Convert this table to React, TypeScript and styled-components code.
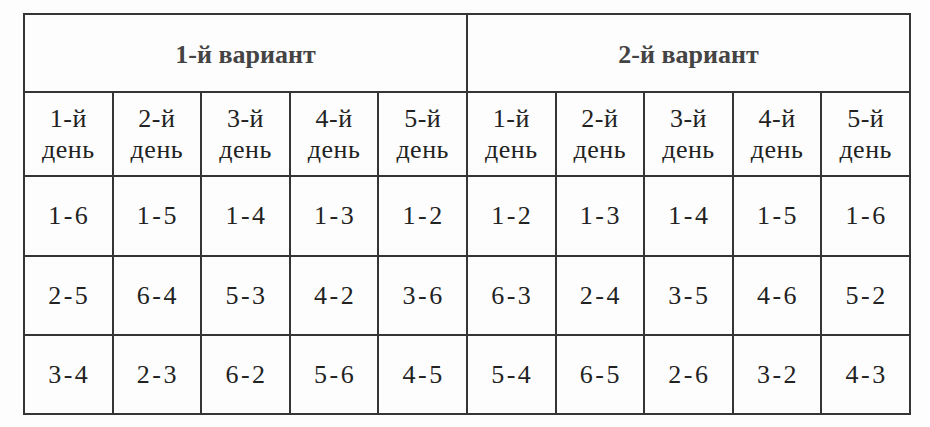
import React from "react";
import styled, { createGlobalStyle } from "styled-components";

const serif = `"Liberation Serif", "DejaVu Serif", "Times New Roman", serif`;

const GlobalStyle = createGlobalStyle`
  body {
    margin: 0;
    background: #ffffff;
    font-family: ${serif};
  }
`;

const Page = styled.div`
  width: 930px;
  height: 427px;
  padding: 13px 0 0 23px;
  box-sizing: border-box;
  background: #fdfdfd;
`;

const Table = styled.table`
  border-collapse: collapse;
  table-layout: fixed;
  width: 888px;
  color: #222222;
  font-family: ${serif};
`;

const Cell = styled.td<{ $h: number }>`
  border: 2px solid #353535;
  height: ${(p) => p.$h}px;
  padding: 0;
  text-align: center;
  vertical-align: middle;
  box-sizing: border-box;
  font-family: ${serif};
`;

const VariantCell = styled(Cell)`
  font-size: 26px;
  font-weight: bold;
  color: #444444;
  padding-top: 4px;
`;

const DayCell = styled(Cell)`
  font-size: 26px;
  line-height: 31px;
  letter-spacing: 0.5px;
`;

const PairCell = styled(Cell)`
  font-size: 26px;
  letter-spacing: 2.5px;
  padding-left: 2px;
`;

const variants = ["1-й вариант", "2-й вариант"];
const days = [1, 2, 3, 4, 5];
const rows = [
  ["1-6", "1-5", "1-4", "1-3", "1-2", "1-2", "1-3", "1-4", "1-5", "1-6"],
  ["2-5", "6-4", "5-3", "4-2", "3-6", "6-3", "2-4", "3-5", "4-6", "5-2"],
  ["3-4", "2-3", "6-2", "5-6", "4-5", "5-4", "6-5", "2-6", "3-2", "4-3"],
];

export default function App() {
  return (
    <Page>
      <GlobalStyle />
      <Table>
        <tbody>
          <tr>
            {variants.map((v) => (
              <VariantCell key={v} colSpan={5} $h={78}>
                {v}
              </VariantCell>
            ))}
          </tr>
          <tr>
            {variants.map((v) =>
              days.map((d) => (
                <DayCell key={v + d} $h={84}>
                  {d}-й
                  <br />
                  день
                </DayCell>
              ))
            )}
          </tr>
          {rows.map((row, i) => (
            <tr key={i}>
              {row.map((pair, j) => (
                <PairCell key={j} $h={i === 0 ? 80 : 79}>
                  {pair}
                </PairCell>
              ))}
            </tr>
          ))}
        </tbody>
      </Table>
    </Page>
  );
}
